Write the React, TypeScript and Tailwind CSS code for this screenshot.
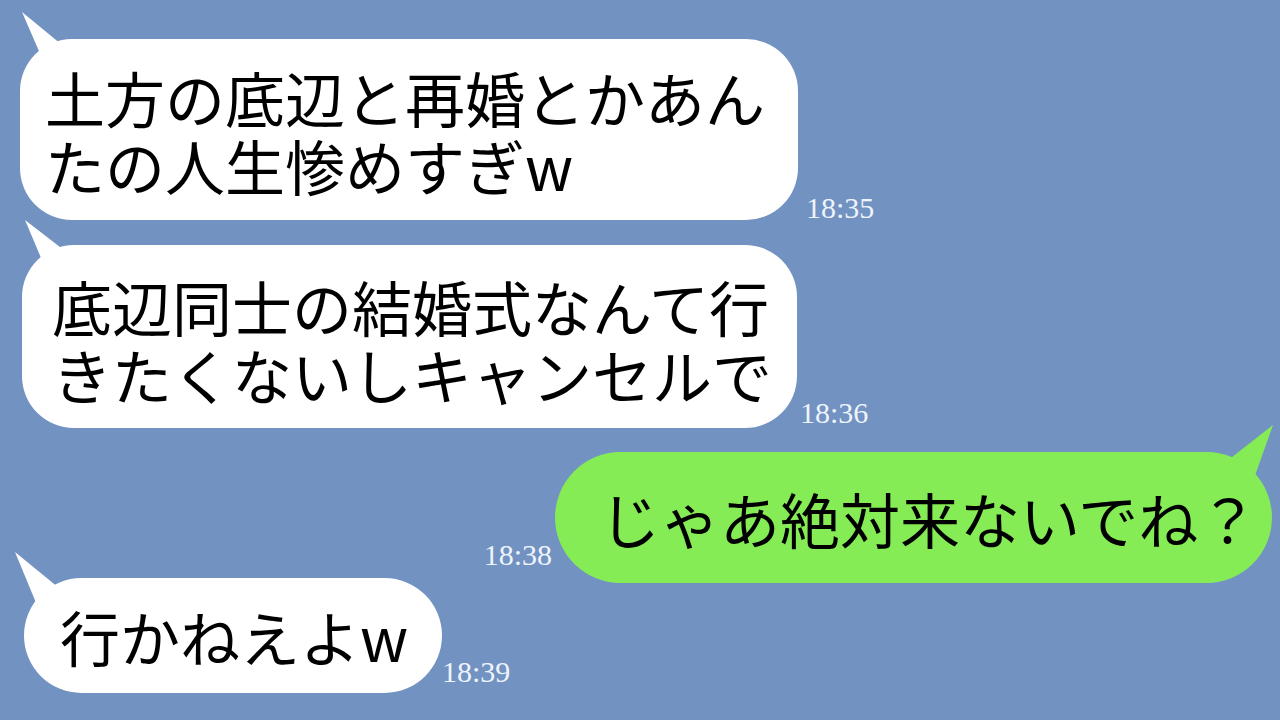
import React from "react";

type TailProps = { points: string; fill: string; side: "left" | "right" };

// Speech-bubble tail drawn from the bubble's top corner outward.
function Tail({ points, fill, side }: TailProps) {
  return (
    <div className={side === "left" ? "absolute left-0 top-0" : "absolute left-full top-0"}>
      <svg width="1" height="1" className="overflow-visible block">
        <polygon points={points} fill={fill} />
      </svg>
    </div>
  );
}

function Time({ children, className }: { children: React.ReactNode; className: string }) {
  return (
    <span
      className={
        "font-['Liberation_Serif',serif] text-[30px] leading-[24px] text-[#eef4fb] whitespace-nowrap " +
        className
      }
    >
      {children}
    </span>
  );
}

export default function App() {
  return (
    <div className="w-[1280px] h-[720px] overflow-hidden bg-[#7292c2] font-['Noto_Sans_CJK_JP',sans-serif] text-black">
      <div className="flex flex-col pt-[39px]">
        {/* incoming 1 */}
        <div className="flex items-end pl-[20px]">
          <div className="relative w-[778px] h-[181px] rounded-[52px] bg-white pl-[25px] pt-[3px] flex flex-col justify-center text-[60px] leading-[68px] whitespace-nowrap">
            <Tail side="left" fill="#ffffff" points="2,-27 47,10 40,30 25,26" />
            <span className="relative">土方の底辺と再婚とかあん</span>
            <span className="relative">たの人生惨めすぎw</span>
          </div>
          <Time className="ml-[8px] mb-0">18:35</Time>
        </div>

        {/* incoming 2 */}
        <div className="flex items-end pl-[22px] mt-[25px]">
          <div className="relative w-[775px] h-[183px] rounded-[52px] bg-white pl-[30px] pt-[6px] flex flex-col justify-center text-[60px] leading-[68px] whitespace-nowrap">
            <Tail side="left" fill="#ffffff" points="3,-25 47,9 40,30 25,27" />
            <span className="relative">底辺同士の結婚式なんて行</span>
            <span className="relative">きたくないしキャンセルで</span>
          </div>
          <Time className="ml-[3px] mb-[3px]">18:36</Time>
        </div>

        {/* outgoing */}
        <div className="flex items-end justify-end pr-[8px] mt-[24px]">
          <Time className="mr-[3px] mb-[16px]">18:38</Time>
          <div className="relative w-[717px] h-[131px] rounded-full bg-[#86ec56] pl-[45px] flex items-center text-[60px] leading-[68px] whitespace-nowrap">
            <Tail side="right" fill="#86ec56" points="1,-27 -45,9 -40,35 -20,32" />
            <span className="relative">じゃあ絶対来ないでね？</span>
          </div>
        </div>

        {/* incoming 3 */}
        <div className="flex items-end pl-[24px] mt-[-5px]">
          <div className="relative w-[418px] h-[115px] rounded-full bg-white pl-[36px] flex items-center text-[60px] leading-[68px] whitespace-nowrap">
            <Tail side="left" fill="#ffffff" points="-9,-26 35,10 35,32 15,32" />
            <span className="relative">行かねえよw</span>
          </div>
          <Time className="mb-[9px]">18:39</Time>
        </div>
      </div>
    </div>
  );
}
